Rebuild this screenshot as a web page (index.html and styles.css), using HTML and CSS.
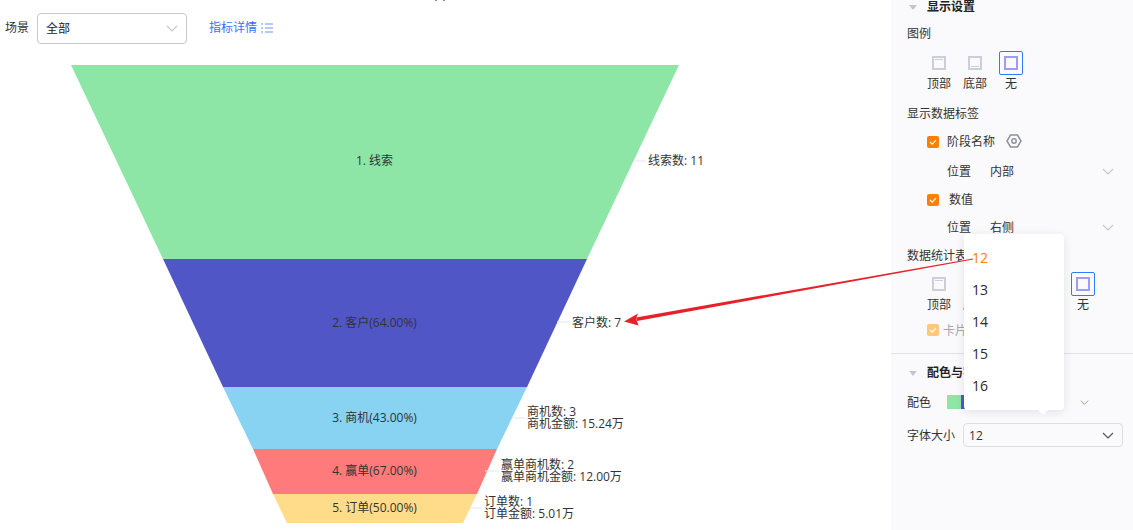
FILE: index.html
```html
<!DOCTYPE html>
<html lang="zh">
<head>
<meta charset="utf-8">
<title>漏斗图设置</title>
<link rel="stylesheet" href="styles.css">
</head>
<body>
<div class="page">
  <main class="main">
    <div class="toolbar">
      <span class="field-label">场景</span>
      <div class="scene-select">
        <span>全部</span>
        <svg class="chev chev-light" viewBox="0 0 12 7"><path d="M1 1l5 5 5-5"/></svg>
      </div>
      <a class="detail-link">指标详情
        <svg class="list-icon" viewBox="0 0 12 10"><path d="M0 1h2M4 1h8M0 5h2M4 5h8M0 9h2M4 9h8"/></svg>
      </a>
    </div>
    <svg class="funnel" viewBox="0 65 891 465">
      <polygon points="71,65 679,65 587,259 163,259" fill="#8de6a6"/>
      <polygon points="163,259 587,259 527,387 223,387" fill="#5156c6"/>
      <polygon points="223,387 527,387 497,449 253,449" fill="#88d2f2"/>
      <polygon points="253,449 497,449 477,494 273,494" fill="#ff7b7b"/>
      <polygon points="273,494 477,494 463,523 287,523" fill="#ffdc8a"/>
      <g class="leader">
        <path d="M634 161H646M557 322H570M512 418H525M485 471H499M470 508H482"/>
      </g>
      <g class="inner">
        <text x="374.500" y="165">1. 线索</text>
        <text x="374.500" y="327">2. 客户(64.00%)</text>
        <text x="374.500" y="422">3. 商机(43.00%)</text>
        <text x="374.500" y="475">4. 赢单(67.00%)</text>
        <text x="374.500" y="512">5. 订单(50.00%)</text>
      </g>
      <g class="outer">
        <text x="648" y="165">线索数: 11</text>
        <text x="572" y="327">客户数: 7</text>
        <text x="527" y="416">商机数: 3</text>
        <text x="527" y="428">商机金额: 15.24万</text>
        <text x="501" y="469">赢单商机数: 2</text>
        <text x="501" y="481">赢单商机金额: 12.00万</text>
        <text x="484" y="506">订单数: 1</text>
        <text x="484" y="518">订单金额: 5.01万</text>
      </g>
    </svg>
  </main>

  <aside class="panel">
    <div class="head head-first"><i class="tri"></i><b>显示设置</b></div>
    <div class="title title-legend">图例</div>
    <div class="options options-legend">
      <div class="opt"><span class="opt-box"><i class="lay lay-top"></i></span><span class="opt-text">顶部</span></div>
      <div class="opt"><span class="opt-box"><i class="lay lay-bottom"></i></span><span class="opt-text">底部</span></div>
      <div class="opt"><span class="opt-box on"><i class="lay lay-none"></i></span><span class="opt-text">无</span></div>
    </div>
    <div class="title title-data">显示数据标签</div>
    <div class="check-row row-stage">
      <i class="check"><svg viewBox="0 0 12 12"><path d="M3 6l2.2 2.2L9 4.2"/></svg></i>
      <span class="check-text">阶段名称</span>
      <svg class="hex" viewBox="0 0 16 16"><path d="M4.5 2h7L15 8l-3.500 6h-7L1 8z"/><circle cx="8" cy="8" r="2.200"/></svg>
    </div>
    <div class="pos-row pos-first"><span class="pos-label">位置</span><span class="pos-val">内部</span><svg class="chev chev-light" viewBox="0 0 12 7"><path d="M1 1l5 5 5-5"/></svg></div>
    <div class="check-row row-value">
      <i class="check"><svg viewBox="0 0 12 12"><path d="M3 6l2.2 2.2L9 4.2"/></svg></i>
      <span class="check-text check-text-value">数值</span>
    </div>
    <div class="pos-row pos-second"><span class="pos-label">位置</span><span class="pos-val">右侧</span><svg class="chev chev-light" viewBox="0 0 12 7"><path d="M1 1l5 5 5-5"/></svg></div>
    <div class="title title-stat">数据统计表</div>
    <div class="options options-stat">
      <div class="opt"><span class="opt-box"><i class="lay lay-top"></i></span><span class="opt-text">顶部</span></div>
      <div class="opt"><span class="opt-box"><i class="lay lay-bottom"></i></span><span class="opt-text">底部</span></div>
      <div class="opt"><span class="opt-box"><i class="lay lay-top"></i></span><span class="opt-text">左侧</span></div>
      <div class="opt"><span class="opt-box"><i class="lay lay-bottom"></i></span><span class="opt-text">右侧</span></div>
      <div class="opt"><span class="opt-box on"><i class="lay lay-none"></i></span><span class="opt-text">无</span></div>
    </div>
    <div class="check-row row-card">
      <i class="check check-off"><svg viewBox="0 0 12 12"><path d="M3 6l2.2 2.2L9 4.2"/></svg></i>
      <span class="check-text check-text-card">卡片样式</span>
    </div>
    <div class="divider"></div>
    <div class="head head-color"><i class="tri"></i><b>配色与字体</b></div>
    <div class="color-row">
      <span class="row-label">配色</span>
      <span class="swatch"><i class="s1"></i><i class="s2"></i></span>
      <svg class="chev chev-brown" viewBox="0 0 12 7"><path d="M1 1l5 5 5-5"/></svg>
    </div>
    <div class="font-row">
      <span class="row-label">字体大小</span>
      <div class="font-select"><span class="font-val">12</span><svg class="chev chev-dark" viewBox="0 0 12 7"><path d="M1 1l5 5 5-5"/></svg></div>
    </div>

    <div class="dropdown">
      <div class="dd-item dd-active">12</div>
      <div class="dd-item">13</div>
      <div class="dd-item">14</div>
      <div class="dd-item">15</div>
      <div class="dd-item">16</div>
    </div>
  </aside>

  <svg class="annot" viewBox="0 0 1133 530">
    <polygon points="973,258.500 973,259.500 637,321 636,317.500" class="annot-head"/>
    <polygon points="624,321.500 638,313.500 636,318.500 638.500,325.500" class="annot-head"/>
  </svg>
</div>
</body>
</html>
```

FILE: styles.css
```css
* { box-sizing: border-box; }
html, body { margin: 0; height: 100%; overflow: hidden; background: #fff; }
body { font: 12px/16px "Open Sans", "Noto Sans CJK SC", sans-serif; color: #333; }
.page { position: relative; display: flex; width: 1133px; height: 530px; overflow: hidden; }

/* left */
.main { position: relative; width: 891px; flex: none; }
.main::before { content: ""; position: absolute; left: 435px; top: 0; width: 2px; height: 1px; background: #8a8fa8; box-shadow: 8px 0 0 #8a8fa8; }
.toolbar { height: 65px; display: flex; align-items: flex-start; padding: 13px 0 0 5px; }
.field-label { margin: 7px 8px 0 0; }
.scene-select { width: 150px; height: 31px; border: 1px solid #c6c7d2; border-radius: 4px; background: #fff; display: flex; align-items: center; justify-content: space-between; padding: 0 8px; color: #222; }
.detail-link { margin: 7px 0 0 22px; color: #3470ff; display: flex; align-items: center; gap: 4px; }
.list-icon { width: 12px; height: 10px; fill: none; stroke: #6b93ff; stroke-width: 1; }
.chev { width: 12px; height: 7px; fill: none; stroke-width: 1.200; flex: none; }
.chev-light { stroke: #c6c7d2; }
.chev-dark { stroke: #555; }
.chev-brown { stroke: #a58469; width: 9px; height: 5px; }
.funnel { display: block; width: 891px; height: 465px; }
.funnel text { font: 12px "Open Sans", "Noto Sans CJK SC", sans-serif; fill: #333; }
.inner text { text-anchor: middle; }
.leader path { stroke: #e4e4ee; stroke-width: 1; fill: none; }

/* panel */
.panel { position: relative; flex: 1; background: #fafafc; padding-left: 16px; }
.head { display: flex; align-items: center; height: 12px; color: #222; }
.head b { font-weight: 700; margin-left: 10px; padding-top: 2px; }
.tri { width: 0; height: 0; border-left: 4px solid transparent; border-right: 4px solid transparent; border-top: 5px solid #c4c5d0; margin: 2px 0 0 2px; }
.title { height: 12px; line-height: 14px; }
.title-legend { margin-top: 15px; }
.title-data { margin-top: 16px; }
.title-stat { margin-top: 12px; }
.options { display: flex; margin-left: 14px; }
.options-legend { margin-top: 12px; }
.options-stat { margin-top: 11px; }
.opt { width: 36px; display: flex; flex-direction: column; align-items: center; text-align: center; }
.opt-box { width: 24px; height: 24px; display: flex; align-items: center; justify-content: center; border: 1px solid transparent; border-radius: 2px; }
.opt-box.on { border-color: #2f7bff; }
.opt-text { height: 16px; line-height: 18px; }
.lay { position: relative; width: 14px; height: 14px; border: 2px solid #cdced8; display: block; }
.lay-top::after, .lay-bottom::after { content: ""; position: absolute; left: 1px; right: 1px; height: 1px; background: #cdced8; }
.lay-top::after { top: 1px; }
.lay-bottom::after { bottom: 1px; }
.lay-none { border-color: #a09cf5; }
.check-row { display: flex; align-items: center; height: 20px; padding-left: 20px; }
.row-stage { margin-top: 13px; }
.row-value { margin-top: 9px; }
.row-card { margin-top: 8px; }
.check { width: 12px; height: 12px; border-radius: 2px; background: #ff8000; display: block; flex: none; }
.check svg { display: block; width: 12px; height: 12px; fill: none; stroke: #fff; stroke-width: 1.200; }
.check-off { background: #ffc878; }
.check-text { margin-left: 8px; }
.check-text-value { margin-left: 10px; }
.check-text-card { margin-left: 4px; color: #a4a5ae; padding-top: 2px; }
.hex { width: 16px; height: 16px; margin: 0 0 2px 11px; fill: none; stroke: #8e909c; stroke-width: 1.500; }
.pos-row { display: flex; align-items: center; height: 20px; padding-left: 40px; }
.pos-first { margin-top: 9px; }
.pos-second { margin-top: 7px; }
.pos-label { width: 43px; padding-top: 2px; }
.pos-val { flex: 1; padding-top: 2px; }
.pos-row .chev { margin-right: 19px; }
.divider { height: 1px; background: #e2e2ea; margin: 13px 0 0 -16px; }
.head-color { margin-top: 12px; }
.color-row { display: flex; align-items: center; height: 20px; margin-top: 14px; }
.row-label { flex: none; padding-top: 2px; }
.swatch { display: flex; width: 100px; height: 14px; margin-left: 16px; }
.s1 { width: 14px; background: #8de6a6; }
.s2 { width: 14px; background: #5156c6; }
.chev-brown { margin-left: 33px; }
.font-row { display: flex; align-items: center; margin-top: 11px; }
.font-select { width: 160px; height: 24px; margin-left: 8px; border: 1px solid #dcdde6; border-radius: 4px; display: flex; align-items: center; justify-content: space-between; padding: 0 8px 0 5px; color: #333; }
.font-val { padding-top: 2px; }

/* dropdown over the panel */
.dropdown { position: absolute; left: 73px; top: 234px; width: 100px; height: 176px; padding: 8px 0; background: #fff; border-radius: 4px; box-shadow: 0 2px 10px rgba(70, 70, 110, .14); }
.dropdown::after { content: ""; position: absolute; right: 16px; bottom: -5px; border-left: 5px solid transparent; border-right: 5px solid transparent; border-top: 5px solid #fff; }
.dd-item { height: 32px; line-height: 32px; padding-left: 8px; font-size: 14px; color: #2a2a2a; }
.dd-active { color: #ff8000; }

/* arrow drawn over the whole page */
.annot { position: absolute; inset: 0; width: 1133px; height: 530px; pointer-events: none; }
.annot-head { fill: #e8202a; }
```
